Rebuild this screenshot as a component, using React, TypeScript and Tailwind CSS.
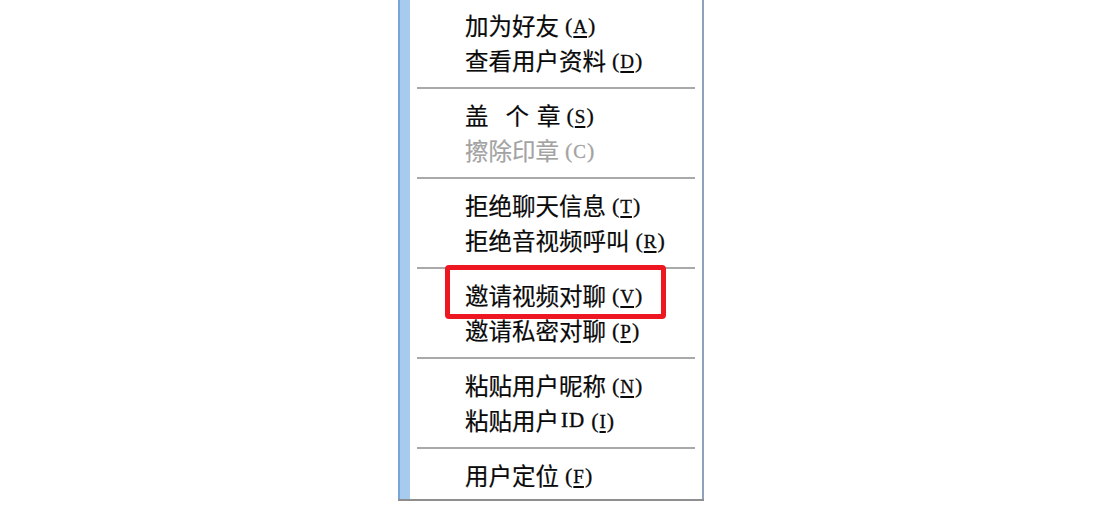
import React from "react";

const cjk = { fontFamily: '"Noto Sans CJK SC", "Noto Sans", sans-serif' };
const serif = { fontFamily: '"Liberation Serif", "DejaVu Serif", serif' };

function Row({ label, k, disabled, monoPrefix }: { label: React.ReactNode; k: string; disabled?: boolean; monoPrefix?: string }) {
  const color = disabled ? "text-[#a3a3a3]" : "text-[#0a0a0a]";
  return (
    <div className={`h-[35px] flex items-center pl-[55px] ${color}`}>
      <span className="text-[23.5px] leading-[35px] font-normal whitespace-nowrap [-webkit-text-stroke:0.2px_currentColor]" style={cjk}>
        {label}
      </span>
      {monoPrefix && (
        <span className="text-[21px] leading-[35px] ml-[2px] tracking-[1px] [-webkit-text-stroke:0.4px_currentColor]" style={serif}>
          {monoPrefix}
        </span>
      )}
      <span className="text-[22px] leading-[35px] ml-[6px] whitespace-nowrap [-webkit-text-stroke:0.3px_currentColor]" style={serif}>
        (
        <span
          className={
            disabled
              ? "text-[19px] mx-[1px]"
              : "text-[19px] mx-[1px] underline underline-offset-[3px] decoration-[1.5px]"
          }
        >
          {k}
        </span>
        )
      </span>
    </div>
  );
}

function Sep() {
  return (
    <div className="h-[20px] flex items-center pl-[7px] pr-[7px]">
      <div className="h-[2px] w-full bg-[#a9a9a9]" />
    </div>
  );
}

export default function App() {
  return (
    <div className="relative w-[1104px] h-[506px] bg-white overflow-hidden">
      <div className="ml-[398px] w-[306px] h-[501px] flex flex-col border-b-2 border-[#8e8e8e]">
        <div className="flex flex-1">
          <div className="w-[12px] bg-[#a6cbef] border-l-2 border-[#7aa6d6]" />
          <div className="flex-1 bg-white border-r-2 border-[#8ea3bb] pt-[8px]">
            <Row label="加为好友" k="A" />
            <Row label="查看用户资料" k="D" />
            <Sep />
            <Row
              label={
                <>
                  <span className="mr-[17px]">盖</span>
                  <span className="mr-[8px]">个</span>
                  <span>章</span>
                </>
              }
              k="S"
            />
            <Row label="擦除印章" k="C" disabled />
            <Sep />
            <Row label="拒绝聊天信息" k="T" />
            <Row label="拒绝音视频呼叫" k="R" />
            <Sep />
            <Row label="邀请视频对聊" k="V" />
            <Row label="邀请私密对聊" k="P" />
            <Sep />
            <Row label="粘贴用户昵称" k="N" />
            <Row label="粘贴用户" monoPrefix="ID" k="I" />
            <Sep />
            <Row label="用户定位" k="F" />
          </div>
        </div>
      </div>
      <div className="absolute left-[445px] top-[265px] w-[221px] h-[54px] border-[5px] border-[#ee1620] rounded-[4px]" />
    </div>
  );
}
